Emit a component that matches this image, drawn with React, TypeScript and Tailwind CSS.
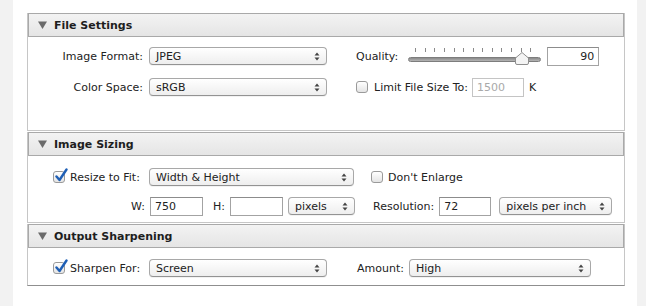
import React from "react";

const font = "font-['DejaVu_Sans',Verdana,sans-serif]";

function Arrows() {
  return (
    <svg width="6" height="9" viewBox="0 0 6 9" className="shrink-0">
      <path d="M3 0.5 L5.5 3.5 H0.5 Z" fill="#444" />
      <path d="M3 8.5 L5.5 5.5 H0.5 Z" fill="#444" />
    </svg>
  );
}

function Select({ value, w }: { value: string; w: string }) {
  return (
    <div
      className={`${w} h-[18px] flex items-center justify-between rounded-[4px] border border-[#a8a8a8] border-b-[#939393] bg-linear-to-b from-white to-[#eeeeee] pl-[6px] pr-[6px] shadow-[0_1px_0_rgba(0,0,0,0.05)]`}
    >
      <span className="leading-none">{value}</span>
      <Arrows />
    </div>
  );
}

function Field({ value, w, right, disabled }: { value: string; w: string; right?: boolean; disabled?: boolean }) {
  return (
    <div
      className={`${w} h-[19px] flex items-center border ${
        disabled ? "border-[#c4c4c4] text-[#a9a9a9]" : "border-[#a3a3a3] border-t-[#8c8c8c]"
      } bg-white px-[4px] ${right ? "justify-end" : ""}`}
    >
      <span className="leading-none">{value}</span>
    </div>
  );
}

function Check({ checked }: { checked?: boolean }) {
  return (
    <div className="relative w-[12px] h-[12px] shrink-0 rounded-[3px] border border-[#9a9a9a] bg-linear-to-b from-white to-[#e4e4e4]">
      {checked && (
        <svg width="14" height="14" viewBox="0 0 14 14" className="absolute left-[0px] top-[-4px]">
          <path
            d="M2.5 8.5 L5.5 12 L12.5 1.5"
            fill="none"
            stroke="#1f5fb5"
            strokeWidth="2.4"
            strokeLinecap="round"
            strokeLinejoin="round"
          />
        </svg>
      )}
    </div>
  );
}

function Header({ title }: { title: string }) {
  return (
    <div className="h-[24px] flex items-center border border-[#a9a9a9] bg-linear-to-b from-[#f3f3f3] to-[#e5e5e5] pl-[9px]">
      <svg width="9" height="8" viewBox="0 0 9 8" className="mr-[7px]">
        <path d="M0 0.5 H9 L4.5 8 Z" fill="#6a6a6a" />
      </svg>
      <span className="font-bold text-[#1e1e1e] leading-none">{title}</span>
    </div>
  );
}

function Slider() {
  const ticks = Array.from({ length: 13 });
  return (
    <div className="relative w-[133px] h-[18px]">
      <div className="absolute left-[7px] right-[10px] top-[1px] flex justify-between">
        {ticks.map((_, i) => (
          <div key={i} className="w-px h-[4px] bg-[#8a8a8a]" />
        ))}
      </div>
      <div className="absolute left-0 right-0 top-[10px] h-[5px] rounded-full bg-linear-to-b from-[#8a8a8a] to-[#b5b5b5] border border-[#7d7d7d]" />
      <svg width="14" height="13" viewBox="0 0 14 13" className="absolute left-[107px] top-[5px]">
        <path
          d="M7 0.5 L13.5 6 V11 Q13.5 12.5 12 12.5 H2 Q0.5 12.5 0.5 11 V6 Z"
          fill="#f4f4f4"
          stroke="#8e8e8e"
        />
      </svg>
    </div>
  );
}

function Label({ children, w }: { children: React.ReactNode; w: string }) {
  return <div className={`${w} shrink-0 text-right leading-none`}>{children}</div>;
}

export default function App() {
  return (
    <div className={`w-[646px] h-[306px] bg-[#f2f2f2] ${font} text-[11px] text-[#222]`}>
      <div className="ml-[13px] w-[624px] h-full bg-white pt-[13px] pl-[14px] pr-[12px]">
        {/* File Settings */}
        <div className="border-x border-b border-[#c6c6c6]">
          <Header title="File Settings" />
          <div className="pt-[10px] pb-[34px] flex flex-col gap-[13px]">
            <div className="flex items-center h-[18px]">
              <Label w="w-[115px]">Image Format:</Label>
              <div className="ml-[6px]">
                <Select value="JPEG" w="w-[178px]" />
              </div>
              <span className="ml-[29px] leading-none">Quality:</span>
              <div className="ml-[10px]">
                <Slider />
              </div>
              <div className="ml-[6px]">
                <Field value="90" w="w-[52px]" right />
              </div>
            </div>
            <div className="flex items-center h-[18px]">
              <Label w="w-[115px]">Color Space:</Label>
              <div className="ml-[6px]">
                <Select value="sRGB" w="w-[178px]" />
              </div>
              <div className="ml-[29px] flex items-center">
                <Check />
                <span className="ml-[6px] leading-none">Limit File Size To:</span>
              </div>
              <div className="ml-[4px]">
                <Field value="1500" w="w-[52px]" disabled />
              </div>
              <span className="ml-[5px] leading-none">K</span>
            </div>
          </div>
        </div>

        {/* Image Sizing */}
        <div className="mt-[1px] border-x border-b border-[#c6c6c6]">
          <Header title="Image Sizing" />
          <div className="pt-[12px] pb-[7px] flex flex-col gap-[11px]">
            <div className="flex items-center h-[18px]">
              <div className="ml-[25px] flex items-center w-[90px] shrink-0">
                <Check checked />
                <span className="ml-[5px] leading-none">Resize to Fit:</span>
              </div>
              <div className="ml-[6px]">
                <Select value="Width & Height" w="w-[205px]" />
              </div>
              <div className="ml-[17px] flex items-center">
                <Check />
                <span className="ml-[5px] leading-none">Don't Enlarge</span>
              </div>
            </div>
            <div className="flex items-center h-[18px]">
              <Label w="w-[117px]">W:</Label>
              <div className="ml-[5px]">
                <Field value="750" w="w-[53px]" />
              </div>
              <span className="ml-[10px] w-[17px] leading-none">H:</span>
              <Field value="" w="w-[53px]" />
              <div className="ml-[5px]">
                <Select value="pixels" w="w-[67px]" />
              </div>
              <span className="ml-[18px] leading-none">Resolution:</span>
              <div className="ml-[5px]">
                <Field value="72" w="w-[52px]" />
              </div>
              <div className="ml-[8px]">
                <Select value="pixels per inch" w="w-[113px]" />
              </div>
            </div>
          </div>
        </div>

        {/* Output Sharpening */}
        <div className="mt-[1px] border-x border-b border-[#8f8f8f] border-x-[#c6c6c6]">
          <Header title="Output Sharpening" />
          <div className="pt-[11px] pb-[8px]">
            <div className="flex items-center h-[18px]">
              <div className="ml-[25px] flex items-center w-[90px] shrink-0">
                <Check checked />
                <span className="ml-[5px] leading-none">Sharpen For:</span>
              </div>
              <div className="ml-[6px]">
                <Select value="Screen" w="w-[178px]" />
              </div>
              <span className="ml-[30px] leading-none">Amount:</span>
              <div className="ml-[5px]">
                <Select value="High" w="w-[182px]" />
              </div>
            </div>
          </div>
        </div>
      </div>
    </div>
  );
}
